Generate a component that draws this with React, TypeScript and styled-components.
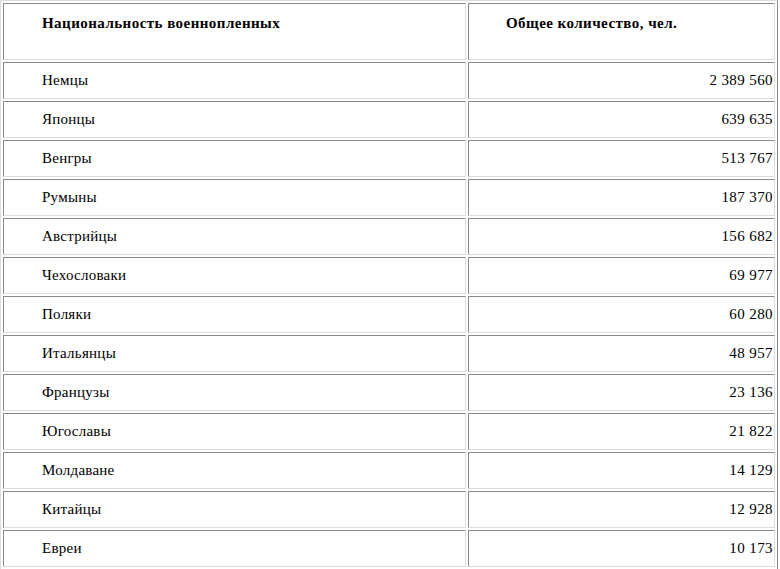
import React from 'react'
import styled, { createGlobalStyle } from 'styled-components'

interface Row {
  nation: string;
  count: string;
}

const rows: Row[] = [
  { nation: 'Немцы', count: '2 389 560' },
  { nation: 'Японцы', count: '639 635' },
  { nation: 'Венгры', count: '513 767' },
  { nation: 'Румыны', count: '187 370' },
  { nation: 'Австрийцы', count: '156 682' },
  { nation: 'Чехословаки', count: '69 977' },
  { nation: 'Поляки', count: '60 280' },
  { nation: 'Итальянцы', count: '48 957' },
  { nation: 'Французы', count: '23 136' },
  { nation: 'Югославы', count: '21 822' },
  { nation: 'Молдаване', count: '14 129' },
  { nation: 'Китайцы', count: '12 928' },
  { nation: 'Евреи', count: '10 173' },
]

const GlobalStyle = createGlobalStyle`
  body {
    margin: 0;
    background: #ffffff;
    font-family: "Liberation Serif", "Times New Roman", serif;
    color: #000000;
  }
`;

const Table = styled.table`
  width: 778px;
  border-collapse: separate;
  border-spacing: 2px;
  border: 1px solid;
  border-color: #dcdcdc #8a8a8a #8a8a8a #dcdcdc;
  font-size: 15px;
  line-height: 17px;
`;

const HeadCell = styled.th<{ $left?: boolean }>`
  height: 41px;
  padding: 11px 2px 3px ${(p) => (p.$left ? '38px' : '37px')};
  vertical-align: top;
  text-align: left;
  font-weight: bold;
  letter-spacing: 0.45px;
  border: 1px solid;
  border-color: #8a8a8a #dcdcdc #dcdcdc #8a8a8a;
  width: ${(p) => (p.$left ? '421px' : 'auto')};
`;

const Cell = styled.td<{ $num?: boolean }>`
  height: 35px;
  padding: 0 ${(p) => (p.$num ? '1px' : '3px')} 0 38px;
  vertical-align: middle;
  text-align: ${(p) => (p.$num ? 'right' : 'left')};
  letter-spacing: ${(p) => (p.$num ? '0.4px' : '0.25px')};
  border: 1px solid;
  border-color: #8a8a8a #dcdcdc #dcdcdc #8a8a8a;
`;

export default function App() {
  return (
    <>
      <GlobalStyle />
      <Table>
        <thead>
          <tr>
            <HeadCell $left>Национальность военнопленных</HeadCell>
            <HeadCell>Общее количество, чел.</HeadCell>
          </tr>
        </thead>
        <tbody>
          {rows.map((r) => (
            <tr key={r.nation}>
              <Cell>{r.nation}</Cell>
              <Cell $num>{r.count}</Cell>
            </tr>
          ))}
        </tbody>
      </Table>
    </>
  )
}
